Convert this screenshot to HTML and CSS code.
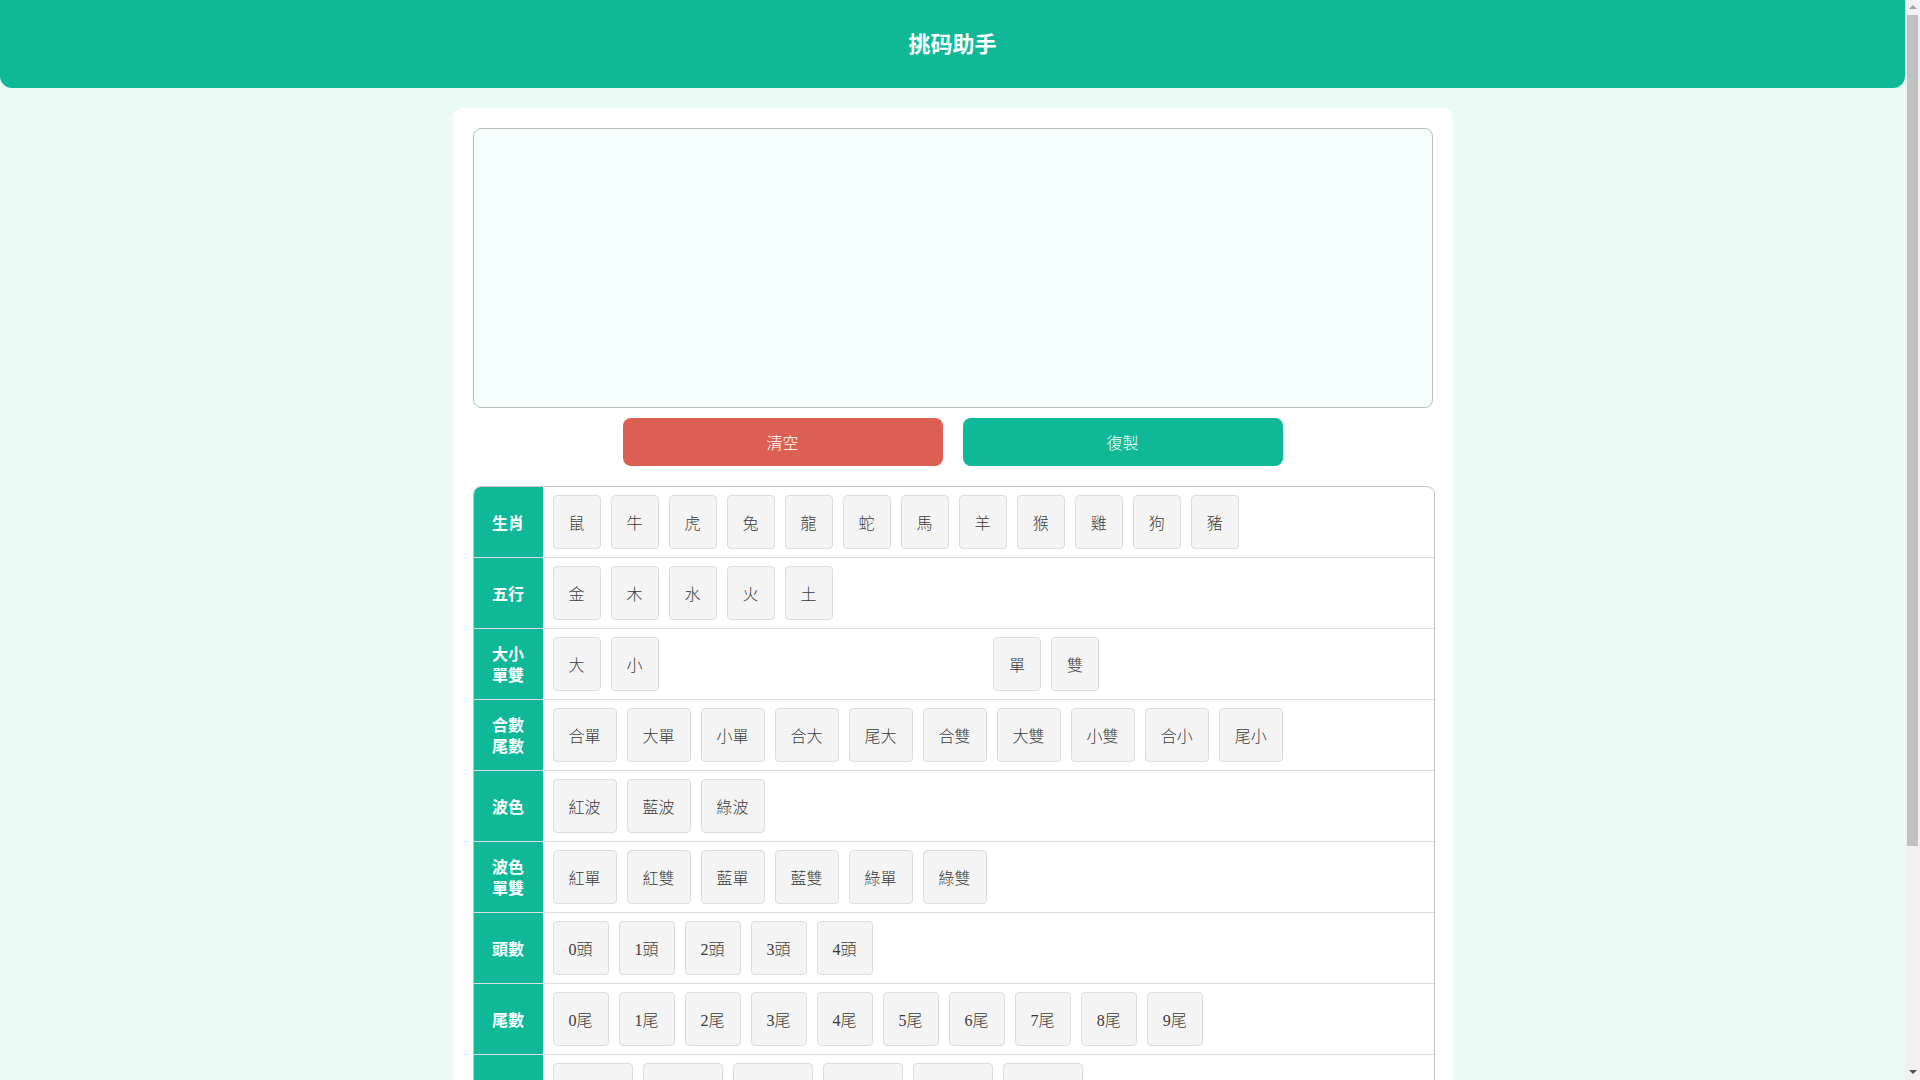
FILE: index.html
```html
<!DOCTYPE html>
<html lang="zh-Hant">
<head>
<meta charset="utf-8">
<title>挑码助手</title>
<link rel="stylesheet" href="styles.css">
</head>
<body>
<div class="page">
<header class="topbar"><h1 class="title">挑码助手</h1></header>
<main class="card">
  <textarea class="output"></textarea>
  <div class="actions">
    <button class="act act-clear">清空</button>
    <button class="act act-copy">復製</button>
  </div>
  <div class="picker">
    <div class="row">
      <div class="label">生肖</div>
      <div class="items">
        <span class="chip">鼠</span><span class="chip">牛</span><span class="chip">虎</span><span class="chip">兔</span><span class="chip">龍</span><span class="chip">蛇</span><span class="chip">馬</span><span class="chip">羊</span><span class="chip">猴</span><span class="chip">雞</span><span class="chip">狗</span><span class="chip">豬</span>
      </div>
    </div>
    <div class="row">
      <div class="label">五行</div>
      <div class="items">
        <span class="chip">金</span><span class="chip">木</span><span class="chip">水</span><span class="chip">火</span><span class="chip">土</span>
      </div>
    </div>
    <div class="row">
      <div class="label">大小<br>單雙</div>
      <div class="items split">
        <div class="group"><span class="chip">大</span><span class="chip">小</span></div>
        <div class="group"><span class="chip">單</span><span class="chip">雙</span></div>
      </div>
    </div>
    <div class="row">
      <div class="label">合數<br>尾數</div>
      <div class="items">
        <span class="chip">合單</span><span class="chip">大單</span><span class="chip">小單</span><span class="chip">合大</span><span class="chip">尾大</span><span class="chip">合雙</span><span class="chip">大雙</span><span class="chip">小雙</span><span class="chip">合小</span><span class="chip">尾小</span>
      </div>
    </div>
    <div class="row">
      <div class="label">波色</div>
      <div class="items">
        <span class="chip">紅波</span><span class="chip">藍波</span><span class="chip">綠波</span>
      </div>
    </div>
    <div class="row">
      <div class="label">波色<br>單雙</div>
      <div class="items">
        <span class="chip">紅單</span><span class="chip">紅雙</span><span class="chip">藍單</span><span class="chip">藍雙</span><span class="chip">綠單</span><span class="chip">綠雙</span>
      </div>
    </div>
    <div class="row">
      <div class="label">頭數</div>
      <div class="items">
        <span class="chip">0頭</span><span class="chip">1頭</span><span class="chip">2頭</span><span class="chip">3頭</span><span class="chip">4頭</span>
      </div>
    </div>
    <div class="row">
      <div class="label">尾數</div>
      <div class="items">
        <span class="chip">0尾</span><span class="chip">1尾</span><span class="chip">2尾</span><span class="chip">3尾</span><span class="chip">4尾</span><span class="chip">5尾</span><span class="chip">6尾</span><span class="chip">7尾</span><span class="chip">8尾</span><span class="chip">9尾</span>
      </div>
    </div>
    <div class="row">
      <div class="label">半波</div>
      <div class="items">
        <span class="chip">紅大單</span><span class="chip">紅小單</span><span class="chip">藍大單</span><span class="chip">藍小單</span><span class="chip">綠大單</span><span class="chip">綠小單</span>
      </div>
    </div>
    <div class="row">
      <div class="label">半波<br>單雙</div>
      <div class="items">
        <span class="chip">紅大雙</span><span class="chip">紅小雙</span><span class="chip">藍大雙</span><span class="chip">藍小雙</span><span class="chip">綠大雙</span><span class="chip">綠小雙</span>
      </div>
    </div>
    <div class="row">
      <div class="label">家野</div>
      <div class="items">
        <span class="chip">家禽</span><span class="chip">野獸</span>
      </div>
    </div>
    <div class="row">
      <div class="label">前後</div>
      <div class="items">
        <span class="chip">前肖</span><span class="chip">後肖</span>
      </div>
    </div>
  </div>
</main>
</div>
<div class="scrollbar" aria-hidden="true">
  <span class="sb-up"></span>
  <span class="sb-thumb"></span>
  <span class="sb-down"></span>
</div>
</body>
</html>
```

FILE: styles.css
```css
html, body {
  margin: 0;
  padding: 0;
}

body {
  background: #ebfaf4;
  font-family: "Liberation Serif", "Noto Sans CJK TC", serif;
  color: #333;
}

.page {
  margin-right: 15px;
  padding-bottom: 4px;
}

.topbar {
  height: 88px;
  background: #0fb998;
  border-radius: 0 0 12px 12px;
  display: flex;
  align-items: center;
  justify-content: center;
}

.title {
  margin: 0 0 5px;
  color: #fff;
  font-family: "Noto Sans CJK SC", "Noto Sans CJK TC", sans-serif;
  font-size: 22px;
  font-weight: bold;
  line-height: 30px;
}

.card {
  display: block;
  width: 960px;
  margin: 20px auto 0;
  padding: 20px;
  background: #fff;
  border-radius: 10px;
}

.output {
  display: block;
  box-sizing: border-box;
  width: 960px;
  height: 280px;
  margin: 0;
  border: 1px solid #bdbdbd;
  border-radius: 8px;
  background: #f4fffd;
  resize: none;
  outline: none;
  padding: 8px;
}

.actions {
  display: flex;
  justify-content: center;
  gap: 20px;
  margin: 10px 0 20px;
}

.act {
  width: 320px;
  height: 48px;
  border: none;
  border-radius: 8px;
  color: #fff;
  font-family: "Noto Sans CJK TC", sans-serif;
  font-size: 16px;
  font-weight: 300;
  padding: 0;
}

.act-clear {
  background: #dc5f53;
}

.act-copy {
  background: #0fb998;
}

.picker {
  width: 100%;
  border: 1px solid #c4c4c4;
  border-radius: 8px;
  overflow: hidden;
}

.row {
  display: flex;
  border-bottom: 1px solid #dcdcdc;
}

.row:last-child {
  border-bottom: none;
}

.label {
  flex: 0 0 69px;
  background: #0fb998;
  color: #fff;
  font-family: "Noto Sans CJK TC", sans-serif;
  font-weight: bold;
  font-size: 16px;
  line-height: 21px;
  display: flex;
  align-items: center;
  justify-content: center;
  text-align: center;
}

.items {
  flex: 1;
  display: flex;
  flex-wrap: wrap;
  gap: 10px;
  padding: 8px 10px;
}

.split {
  flex-wrap: nowrap;
}

.group {
  flex: 1;
  display: flex;
  gap: 10px;
}

.chip {
  box-sizing: border-box;
  height: 54px;
  padding: 0 15px;
  border: 1px solid #dedede;
  border-radius: 4px;
  background: #f4f4f4;
  color: #3a3a3a;
  font-size: 16px;
  font-weight: 300;
  display: inline-flex;
  align-items: center;
  justify-content: center;
  white-space: nowrap;
}

/* drawn window scrollbar */
.scrollbar {
  position: fixed;
  top: 0;
  right: 0;
  width: 15px;
  height: 100vh;
  background: #f1f1f1;
  display: flex;
  flex-direction: column;
  align-items: center;
}

.sb-up,
.sb-down {
  width: 0;
  height: 0;
  border-left: 4px solid transparent;
  border-right: 4px solid transparent;
}

.sb-up {
  border-bottom: 4px solid #a3a3a3;
  margin: 5px 0 6px;
}

.sb-thumb {
  width: 11px;
  height: 831px;
  background: #c1c1c1;
}

.sb-down {
  margin: auto 0 6px;
  border-top: 4px solid #505050;
}
```
